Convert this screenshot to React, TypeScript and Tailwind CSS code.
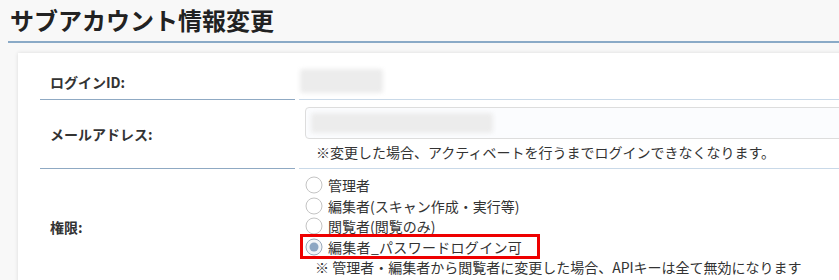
import React from 'react';

const font = { fontFamily: '"Noto Sans CJK JP", "Noto Sans", sans-serif' };

const roles = [
  '管理者',
  '編集者(スキャン作成・実行等)',
  '閲覧者(閲覧のみ)',
  '編集者_パスワードログイン可',
];

const Radio: React.FC<{ checked?: boolean }> = ({ checked }) => (
  <svg width="18" height="18" viewBox="0 0 18 18" className="shrink-0">
    <circle cx="9" cy="9" r="8" fill={checked ? '#f3f5f8' : '#ffffff'} stroke={checked ? '#9aa9ba' : '#c4c4c4'} strokeWidth="1" />
    {checked && <circle cx="9" cy="9" r="4.5" fill="#8da6c3" />}
  </svg>
);

const Blur: React.FC<{ className: string }> = ({ className }) => (
  <div className={`rounded-[3px] bg-[#ececec] blur-[2px] ${className}`} />
);

const App: React.FC = () => {
  return (
    <div className="w-[839px] h-[280px] overflow-hidden bg-[#f8f8f8] text-[#333]" style={font}>
      <h1 className="pl-[10px] pt-[4px] text-[24px] leading-[32px] font-bold text-[#222]">サブアカウント情報変更</h1>
      <div className="ml-[8px] mt-[5px] h-[2px] bg-[#8aaac7]" />

      <div className="ml-[18px] mt-[10px] w-[900px] bg-white pl-[22px] pt-[12px] shadow-[0_0_4px_rgba(0,0,0,0.12)]">
        <div className="grid grid-cols-[255px_1fr] gap-x-[4px]">
          {/* ログインID */}
          <div className="h-[35px] border-b border-[#8fa9c3] pl-[10px] flex items-center text-[14px] font-bold">ログインID:</div>
          <div className="h-[35px] border-b border-[#c9d9e8] pt-[4px] pl-[1px]">
            <Blur className="w-[83px] h-[24px]" />
          </div>

          {/* メールアドレス */}
          <div className="h-[69px] border-b border-[#8fa9c3] pl-[10px] flex items-center text-[14px] font-bold">メールアドレス:</div>
          <div className="h-[69px] border-b border-[#c9d9e8] pt-[7px]">
            <div className="ml-[6px] h-[32px] rounded-[4px] border border-[#dddddd] bg-[#fbfcfe] pl-[5px] pt-[5px]">
              <Blur className="w-[182px] h-[20px]" />
            </div>
            <p className="mt-[3px] pl-[17px] text-[14px] leading-[20px]">※変更した場合、アクティベートを行うまでログインできなくなります。</p>
          </div>

          {/* 権限 */}
          <div className="h-[116px] pl-[10px] flex items-center text-[14px] font-bold">権限:</div>
          <div className="pt-[6px]">
            {roles.map((r, i) => (
              <div key={r} className="relative flex h-[20.5px] items-center gap-[5px] pl-[6px] text-[14px] leading-[20px]">
                <Radio checked={i === 3} />
                <span className={i === 3 ? 'tracking-[0.3px]' : ''}>{r}</span>
                {i === 3 && (
                  <span className="absolute left-[1px] top-[-3px] h-[25px] w-[240px] border-[3px] border-[#ee0000]" />
                )}
              </div>
            ))}
            <p className="pl-[16px] text-[14px] leading-[20px]">※ 管理者・編集者から閲覧者に変更した場合、APIキーは全て無効になります</p>
          </div>
        </div>
      </div>
    </div>
  );
};

export default App;
